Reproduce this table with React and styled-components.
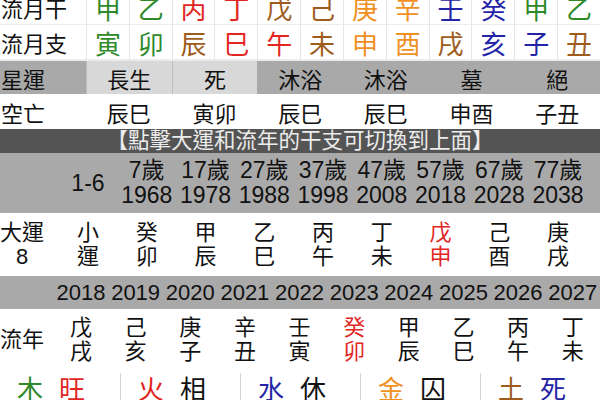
import React from "react";
import styled, { createGlobalStyle } from "styled-components";

const GlobalStyle = createGlobalStyle`
  html, body {
    margin: 0;
    padding: 0;
    background: #ffffff;
  }
  body {
    width: 600px;
    height: 400px;
    overflow: hidden;
  }
`;

const COLORS = {
  wood: "#2f8a2a",
  fire: "#e2261f",
  earth: "#9e5c1c",
  metal: "#f0901f",
  water: "#2424a6",
  plain: "#111111",
};

const ELEMENT = {
  甲: "wood", 乙: "wood", 寅: "wood", 卯: "wood",
  丙: "fire", 丁: "fire", 巳: "fire", 午: "fire",
  戊: "earth", 己: "earth", 辰: "earth", 未: "earth", 戌: "earth", 丑: "earth",
  庚: "metal", 辛: "metal", 申: "metal", 酉: "metal",
  壬: "water", 癸: "water", 亥: "water", 子: "water",
};

const monthStems = ["甲", "乙", "丙", "丁", "戊", "己", "庚", "辛", "壬", "癸", "甲", "乙"];
const monthBranches = ["寅", "卯", "辰", "巳", "午", "未", "申", "酉", "戌", "亥", "子", "丑"];

const stars = [
  { text: "長生", light: true },
  { text: "死", light: true },
  { text: "沐浴" },
  { text: "沐浴" },
  { text: "墓" },
  { text: "絕" },
];
const voids = ["辰巳", "寅卯", "辰巳", "辰巳", "申酉", "子丑"];

const bigLuck = [
  { age: "7歲", year: "1968", gz: "癸卯" },
  { age: "17歲", year: "1978", gz: "甲辰" },
  { age: "27歲", year: "1988", gz: "乙巳" },
  { age: "37歲", year: "1998", gz: "丙午" },
  { age: "47歲", year: "2008", gz: "丁未" },
  { age: "57歲", year: "2018", gz: "戊申", current: true },
  { age: "67歲", year: "2028", gz: "己酉" },
  { age: "77歲", year: "2038", gz: "庚戌" },
];

const years = [
  { year: "2018", gz: "戊戌" },
  { year: "2019", gz: "己亥" },
  { year: "2020", gz: "庚子" },
  { year: "2021", gz: "辛丑" },
  { year: "2022", gz: "壬寅" },
  { year: "2023", gz: "癸卯", current: true },
  { year: "2024", gz: "甲辰" },
  { year: "2025", gz: "乙巳" },
  { year: "2026", gz: "丙午" },
  { year: "2027", gz: "丁未" },
];

const seasons = [
  { el: "木", elColor: "wood", state: "旺", stateColor: "fire" },
  { el: "火", elColor: "fire", state: "相", stateColor: "plain" },
  { el: "水", elColor: "water", state: "休", stateColor: "plain" },
  { el: "金", elColor: "metal", state: "囚", stateColor: "plain" },
  { el: "土", elColor: "earth", state: "死", stateColor: "water" },
];

const Page = styled.div`
  width: 600px;
  height: 400px;
  overflow: hidden;
  color: #111;
  font-family: "Liberation Sans", "Noto Sans CJK TC", sans-serif;
  font-size: 22px;
`;

// the reference is scrolled a little, so the first row is cut at the top
const Scroller = styled.div`
  margin-top: -10px;
`;

const MonthGrid = styled.div`
  display: grid;
  grid-template-columns: 86px repeat(12, 1fr);
  grid-auto-rows: 35px;
  border-bottom: 1px solid #ececec;
`;

const RowLabel = styled.div`
  display: flex;
  align-items: center;
  padding-left: 1px;
  font-size: 22px;
  border-bottom: 1px solid #ececec;
`;

const StemCell = styled.div`
  display: flex;
  align-items: center;
  justify-content: center;
  font-size: 26px;
  color: ${(p) => COLORS[p.$el]};
  border-left: 1px solid #e6e6e6;
  border-bottom: 1px solid #ececec;
`;

const SixGrid = styled.div`
  display: grid;
  grid-template-columns: 86px repeat(6, 1fr);
  height: ${(p) => p.$h}px;
  background: ${(p) => (p.$gray ? "#a9a9a9" : "#ffffff")};
`;

const SixLabel = styled.div`
  display: flex;
  align-items: center;
  padding-left: 1px;
`;

const SixCell = styled.div`
  display: flex;
  align-items: center;
  justify-content: center;
  background: ${(p) => (p.$light ? "#d8d8d8" : "transparent")};
  border-left: ${(p) => (p.$light ? "1px solid #bdbdbd" : "none")};
`;

const Banner = styled.div`
  height: 24px;
  background: #545454;
  color: #ececec;
  text-align: center;
  font-size: 21.5px;
  line-height: 24px;
  white-space: nowrap;
`;

const LuckGrid = styled.div`
  display: grid;
  grid-template-columns: 58.6px repeat(9, 58.75px);
  height: ${(p) => p.$h}px;
  font-size: ${(p) => p.$fs || 22}px;
  background: ${(p) => (p.$gray ? "#a9a9a9" : "#ffffff")};
`;

const YearGrid = styled.div`
  display: grid;
  grid-template-columns: 53.7px repeat(10, 1fr);
  height: ${(p) => p.$h}px;
  background: ${(p) => (p.$gray ? "#a9a9a9" : "#ffffff")};
`;

const Stack = styled.div`
  display: flex;
  flex-direction: column;
  align-items: center;
  justify-content: center;
  line-height: ${(p) => p.$lh || 24}px;
  color: ${(p) => (p.$current ? COLORS.fire : "inherit")};
  white-space: nowrap;
`;

const SideLabel = styled.div`
  display: flex;
  flex-direction: column;
  justify-content: center;
  align-items: center;
  width: 44px;
  line-height: 24px;
`;

const Seasons = styled.div`
  display: grid;
  grid-template-columns: repeat(5, 1fr);
  height: 40px;
`;

const SeasonCell = styled.div`
  display: flex;
  gap: 16px;
  padding: 4px 0 0 17px;
  font-size: 26px;
  line-height: 26px;
  border-left: ${(p) => (p.$first ? "none" : "1px solid #d4d4d4")};
  margin-top: 2px;
`;

const Glyph = styled.span`
  color: ${(p) => COLORS[p.$el]};
`;

export default function App() {
  return (
    <Page>
      <GlobalStyle />
      <Scroller>
        <MonthGrid>
          <RowLabel>流月干</RowLabel>
          {monthStems.map((s, i) => (
            <StemCell key={`s${i}`} $el={ELEMENT[s]}>
              {s}
            </StemCell>
          ))}
          <RowLabel>流月支</RowLabel>
          {monthBranches.map((b, i) => (
            <StemCell key={`b${i}`} $el={ELEMENT[b]}>
              {b}
            </StemCell>
          ))}
        </MonthGrid>

        <SixGrid $gray $h={33}>
          <SixLabel>星運</SixLabel>
          {stars.map((s, i) => (
            <SixCell key={i} $light={s.light}>
              {s.text}
            </SixCell>
          ))}
        </SixGrid>

        <SixGrid $h={35}>
          <SixLabel>空亡</SixLabel>
          {voids.map((v, i) => (
            <SixCell key={i}>{v}</SixCell>
          ))}
        </SixGrid>

        <Banner>【點擊大運和流年的干支可切換到上面】</Banner>

        <LuckGrid $gray $h={60} $fs={23}>
          <div />
          <Stack $lh={25}>1-6</Stack>
          {bigLuck.map((l) => (
            <Stack key={l.year} $lh={25}>
              <span>{l.age}</span>
              <span>{l.year}</span>
            </Stack>
          ))}
        </LuckGrid>

        <LuckGrid $h={63}>
          <SideLabel>
            <span>大運</span>
            <span>8</span>
          </SideLabel>
          <Stack>
            <span>小</span>
            <span>運</span>
          </Stack>
          {bigLuck.map((l) => (
            <Stack key={l.year} $current={l.current}>
              <span>{l.gz[0]}</span>
              <span>{l.gz[1]}</span>
            </Stack>
          ))}
        </LuckGrid>

        <YearGrid $gray $h={33}>
          <div />
          {years.map((y) => (
            <Stack key={y.year}>{y.year}</Stack>
          ))}
        </YearGrid>

        <YearGrid $h={62}>
          <SideLabel>流年</SideLabel>
          {years.map((y) => (
            <Stack key={y.year} $current={y.current}>
              <span>{y.gz[0]}</span>
              <span>{y.gz[1]}</span>
            </Stack>
          ))}
        </YearGrid>

        <Seasons>
          {seasons.map((s, i) => (
            <SeasonCell key={s.el} $first={i === 0}>
              <Glyph $el={s.elColor}>{s.el}</Glyph>
              <Glyph $el={s.stateColor}>{s.state}</Glyph>
            </SeasonCell>
          ))}
        </Seasons>
      </Scroller>
    </Page>
  );
}
